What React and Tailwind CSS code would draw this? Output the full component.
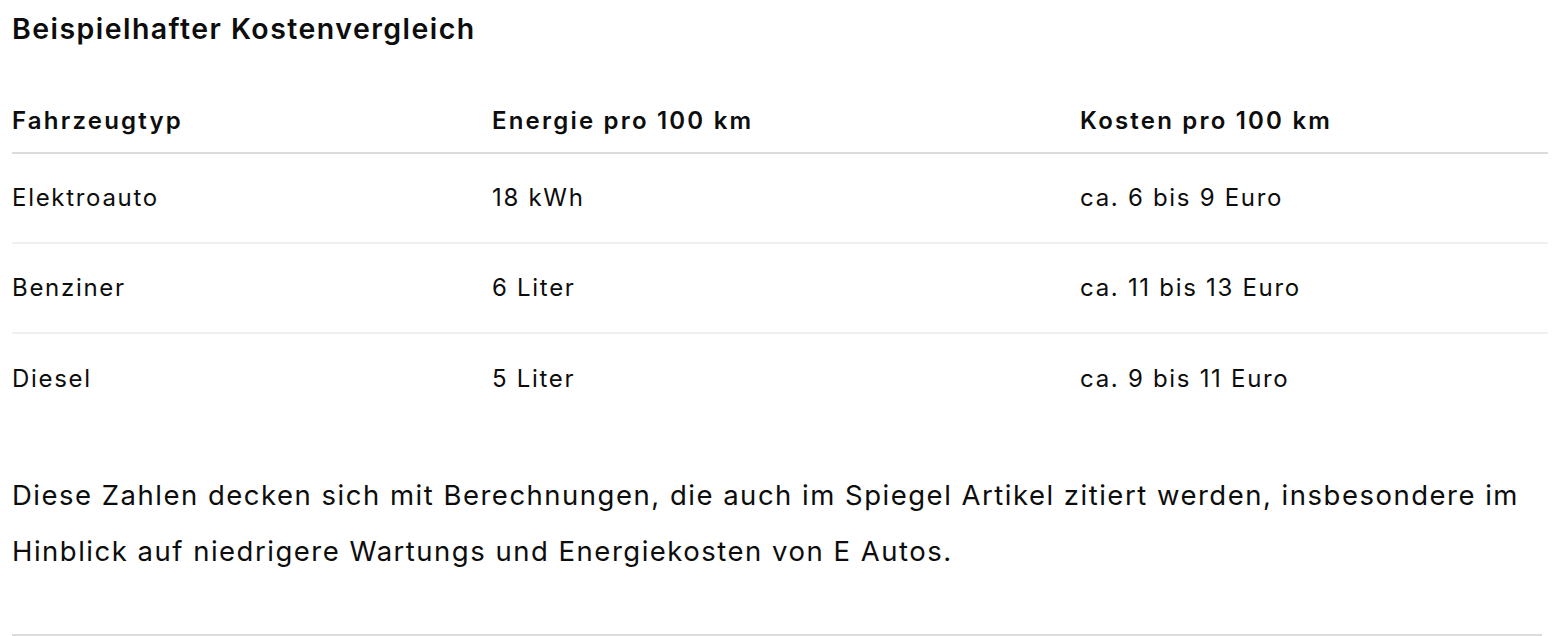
export default function App() {
  const rows = [
    ["Elektroauto", "18 kWh", "ca. 6 bis 9 Euro"],
    ["Benziner", "6 Liter", "ca. 11 bis 13 Euro"],
    ["Diesel", "5 Liter", "ca. 9 bis 11 Euro"],
  ];
  return (
    <div className="bg-white text-[#0d0d0d] px-[12px] w-[1554px] h-[636px] overflow-hidden" style={{ fontFamily: "Inter, 'Noto Sans', sans-serif" }}>
      <h3 className="text-[28.5px] leading-[36px] font-semibold tracking-[1.45px] pt-[11px] m-0">Beispielhafter Kostenvergleich</h3>
      <table className="w-[1536px] table-fixed border-collapse mt-[43px]">
        <colgroup>
          <col className="w-[480px]" />
          <col className="w-[588px]" />
          <col className="w-[468px]" />
        </colgroup>
        <thead>
          <tr className="border-b-2 border-[#dcdcdc]">
            <th className="text-left text-[24px] font-semibold tracking-[2.2px] h-[63px] p-0 align-middle">Fahrzeugtyp</th>
            <th className="text-left text-[24px] font-semibold tracking-[2.2px] h-[63px] p-0 align-middle">Energie pro 100 km</th>
            <th className="text-left text-[24px] font-semibold tracking-[2.2px] h-[63px] p-0 align-middle">Kosten pro 100 km</th>
          </tr>
        </thead>
        <tbody>
          {rows.map((r, i) => (
            <tr key={i} className={i < rows.length - 1 ? "border-b-2 border-[#f0f0f0]" : ""}>
              {r.map((c, j) => (
                <td key={j} className="text-[24px] tracking-[1.7px] h-[90px] p-0 align-middle">{c}</td>
              ))}
            </tr>
          ))}
        </tbody>
      </table>
      <p className="text-[27.5px] leading-[56px] tracking-[1.5px] mt-[44px] m-0">
        Diese Zahlen decken sich mit Berechnungen, die auch im Spiegel Artikel zitiert werden, insbesondere im Hinblick auf niedrigere Wartungs und Energiekosten von E Autos.
      </p>
      <div className="mt-[55px] border-t-2 border-[#dcdcdc]" />
    </div>
  );
}
